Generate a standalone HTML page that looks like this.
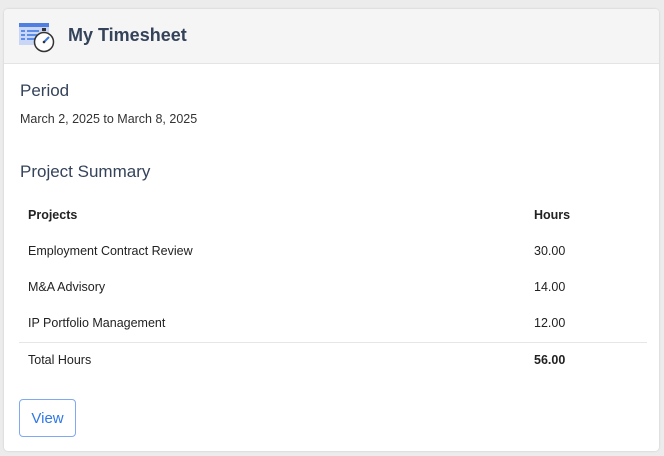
<!DOCTYPE html>
<html><head><style>
body{margin:0;width:664px;height:456px;background:#ececec;font-family:"Liberation Sans",sans-serif;overflow:hidden;position:relative}
.card{position:absolute;left:4px;top:9px;width:655px;height:442px;background:#fff;border-radius:4px;box-shadow:0 0 2px rgba(0,0,0,.15)}
.hdr{height:54px;background:#f5f5f6;border-bottom:1px solid #e3e4e6;border-radius:4px 4px 0 0;position:relative}
.t{position:absolute;color:#34435a;white-space:nowrap}
.r{position:absolute;font-size:12.5px;color:#222;white-space:nowrap}
</style></head><body>
<div class="card">
<div class="hdr">
<svg style="position:absolute;left:14px;top:14px" width="42" height="30" viewBox="0 0 42 30">
<rect x="1" y="0" width="30" height="22" fill="#c9d6f6"/>
<rect x="1" y="0" width="30" height="4" fill="#4f7fe0"/>
<g fill="#5b8de8"><rect x="3" y="7" width="4" height="2"/><rect x="9" y="7" width="12" height="2"/><rect x="3" y="11" width="4" height="2"/><rect x="9" y="11" width="10" height="2"/><rect x="3" y="15" width="4" height="2"/><rect x="9" y="15" width="9" height="2"/></g>
<rect x="24" y="5" width="4" height="3" fill="#333"/>
<circle cx="26" cy="19" r="9.5" fill="#fff" stroke="#333" stroke-width="1.5"/>
<line x1="26" y1="19" x2="31" y2="14" stroke="#3a78e0" stroke-width="2"/>
<circle cx="26" cy="19" r="1.3" fill="#333"/>
</svg>
<div class="t" style="left:64px;top:16px;font-size:18px;font-weight:bold">My Timesheet</div>
</div>
<div class="t" style="left:16px;top:72px;font-size:17px">Period</div>
<div class="t" style="left:16px;top:103px;font-size:12.5px;color:#333">March 2, 2025 to March 8, 2025</div>
<div class="t" style="left:16px;top:153px;font-size:17px">Project Summary</div>
<div class="r" style="left:24px;top:199px;font-weight:bold">Projects</div>
<div class="r" style="left:530px;top:199px;font-weight:bold">Hours</div>
<div class="r" style="left:24px;top:235px">Employment Contract Review</div>
<div class="r" style="left:530px;top:235px">30.00</div>
<div class="r" style="left:24px;top:271px">M&amp;A Advisory</div>
<div class="r" style="left:530px;top:271px">14.00</div>
<div class="r" style="left:24px;top:307px">IP Portfolio Management</div>
<div class="r" style="left:530px;top:307px">12.00</div>
<div style="position:absolute;left:15px;top:333px;width:628px;height:1px;background:#e6e6e6"></div>
<div class="r" style="left:24px;top:344px">Total Hours</div>
<div class="r" style="left:530px;top:344px;font-weight:bold">56.00</div>
<div style="position:absolute;left:15px;top:390px;width:55px;height:36px;border:1px solid #7fa9f0;border-radius:4px;color:#2f78e8;font-size:15px;line-height:38px;text-align:center">View</div>
</div>
</body></html>
